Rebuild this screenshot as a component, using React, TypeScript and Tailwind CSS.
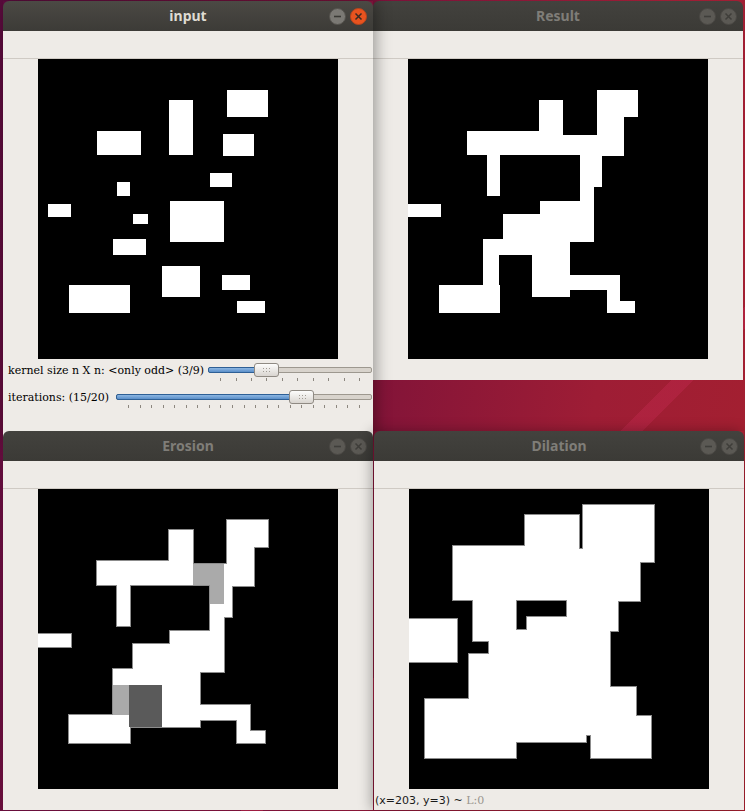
import React from 'react';

type Box = [number, number, number, number, string?];

const INPUT: Box[] = [
  [189, 31, 41, 27], [131, 41, 24, 55], [59, 72, 44, 24], [185, 75, 31, 22],
  [172, 114, 22, 14], [79, 123, 13, 14], [10, 145, 23, 13], [95, 155, 15, 10],
  [132, 142, 54, 41], [75, 180, 33, 16], [124, 207, 38, 31], [184, 216, 28, 15],
  [31, 226, 61, 28], [199, 242, 28, 12],
];

const RESULT: Box[] = [
  [189, 31, 41, 27], [189, 31, 27, 66], [131, 41, 24, 55], [59, 72, 72, 24],
  [155, 76, 34, 20], [79, 96, 13, 41], [172, 96, 22, 32], [172, 128, 14, 14],
  [132, 142, 54, 41], [95, 155, 37, 25], [75, 180, 87, 16], [124, 183, 38, 55],
  [75, 196, 16, 30], [31, 226, 61, 28], [162, 216, 50, 15], [199, 231, 13, 11],
  [199, 242, 28, 12], [0, 145, 33, 13],
];

const EROSION: Box[] = [
  [189, 31, 41, 27], [189, 31, 27, 66], [186, 75, 30, 22], [131, 41, 24, 55],
  [59, 72, 96, 24], [79, 96, 13, 41], [186, 96, 8, 32], [172, 115, 14, 27],
  [0, 145, 33, 13], [132, 142, 54, 41], [95, 155, 37, 25], [75, 180, 87, 16],
  [124, 183, 38, 55], [31, 226, 61, 28], [162, 216, 50, 15], [199, 231, 13, 11],
  [199, 242, 28, 12],
  [155, 75, 31, 21, '#aaaaaa'], [172, 96, 14, 19, '#aaaaaa'],
  [75, 196, 16, 30, '#aaaaaa'], [91, 196, 33, 42, '#5a5a5a'],
];

const DILATION: Box[] = [
  [174, 16, 71, 57], [116, 26, 54, 34], [44, 57, 126, 54], [170, 60, 61, 52],
  [64, 111, 145, 31], [64, 142, 137, 10], [80, 152, 121, 13], [60, 165, 141, 33],
  [60, 198, 117, 12], [177, 198, 50, 29], [107, 210, 70, 43], [182, 227, 60, 42],
  [177, 227, 6, 19], [16, 210, 91, 59], [0, 130, 48, 43],
];

function Canvas({ boxes, outline = false, hole = false }: { boxes: Box[]; outline?: boolean; hole?: boolean }) {
  return (
    <svg width={300} height={300} viewBox="0 0 300 300" className="block" shapeRendering="crispEdges">
      <rect width={300} height={300} fill="#000" />
      {outline &&
        boxes.map(([x, y, w, h], i) => (
          <rect key={'o' + i} x={x} y={y} width={w} height={h} fill="none" stroke="#8c8c8c" strokeWidth={2} />
        ))}
      {boxes.map(([x, y, w, h, c], i) => (
        <rect key={i} x={x} y={y} width={w} height={h} fill={c ?? '#fff'} />
      ))}
      {hole && <path d="M107 111 H157 V127 H117 V140 H107 Z" fill="#000" stroke="#8c8c8c" strokeWidth={1} />}
    </svg>
  );
}

function TitleButtons({ active }: { active: boolean }) {
  return (
    <div className="absolute right-[6px] top-[7px] flex gap-[4px]">
      <div
        className={`w-[17px] h-[17px] rounded-full flex items-center justify-center border ${
          active ? 'bg-[#7b7974] border-[#55534e]' : 'bg-[#5b5954] border-[#4a4844]'
        }`}
      >
        <svg width="9" height="9" viewBox="0 0 9 9">
          <path d="M1 4.5 H8" stroke={active ? '#3a3935' : '#3f3e3a'} strokeWidth="1.6" />
        </svg>
      </div>
      <div
        className={`w-[17px] h-[17px] rounded-full flex items-center justify-center border ${
          active ? 'bg-[#e8531f] border-[#b8441c]' : 'bg-[#5b5954] border-[#4a4844]'
        }`}
      >
        <svg width="9" height="9" viewBox="0 0 9 9">
          <path d="M1.5 1.5 L7.5 7.5 M7.5 1.5 L1.5 7.5" stroke={active ? '#3b2a22' : '#3f3e3a'} strokeWidth="1.5" />
        </svg>
      </div>
    </div>
  );
}

function Window({
  title,
  active = false,
  className,
  children,
}: {
  title: string;
  active?: boolean;
  className: string;
  children: React.ReactNode;
}) {
  return (
    <div className={`absolute flex flex-col ${className}`}>
      <div
        className={`relative h-[30px] shrink-0 rounded-t-[6px] flex items-center justify-center ${
          active ? 'bg-gradient-to-b from-[#4b4944] to-[#3c3b37]' : 'bg-gradient-to-b from-[#43423e] to-[#3b3a36]'
        }`}
      >
        <span
          className={`font-['Noto_Sans'] font-bold text-[14px] leading-none ${
            active ? 'text-[#dfdbd2]' : 'text-[#7f7d78]'
          }`}
        >
          {title}
        </span>
        <TitleButtons active={active} />
      </div>
      <div className="flex-1 bg-[#eeebe7] flex flex-col">
        <div className="h-[28px] shrink-0 border-b border-[#cfcac4]" />
        {children}
      </div>
    </div>
  );
}

function Slider({ value, max }: { value: number; max: number }) {
  const frac = value / max;
  return (
    <div className="relative flex-1 h-[19px]">
      <div className="absolute left-0 right-0 top-[4px] h-[6px] rounded-[2px] border border-[#9d988f] bg-[#d8d3cc]" />
      <div
        className="absolute left-0 top-[4px] h-[6px] rounded-l-[2px] border border-[#2e5f95] bg-gradient-to-b from-[#8cb6e2] to-[#5b8fc9]"
        style={{ width: `calc(${frac} * (100% - 24px) + 12px)` }}
      />
      <div
        className="absolute top-0 w-[25px] h-[14px] rounded-[3px] border border-[#8f8a83] bg-gradient-to-b from-[#fdfdfc] to-[#d9d5d0] flex items-center justify-center"
        style={{ left: `calc(${frac} * (100% - 24px) - 1px)` }}
      >
        <div className="w-[8px] h-[7px] bg-[radial-gradient(#a19c95_0.8px,transparent_1px)] bg-[length:3px_3px]" />
      </div>
      <div className="absolute left-[12px] right-[12px] top-[15px] flex justify-between">
        {Array.from({ length: max + 1 }).map((_, i) => (
          <div key={i} className="w-px h-[3px] bg-[#8c877f]" />
        ))}
      </div>
    </div>
  );
}

export default function App() {
  return (
    <div className="relative w-[745px] h-[811px] overflow-hidden bg-[linear-gradient(135deg,transparent_67.6%,rgba(185,38,72,0.55)_67.6%,rgba(185,38,72,0.55)_69%,transparent_69%),linear-gradient(100deg,#5a0b3d_0%,#7d1239_45%,#9e1d35_75%,#a5202f_100%)]">
      {/* Result */}
      <Window title="Result" className="left-[373px] top-[1px] w-[370px] h-[379px]">
        <div className="flex justify-center">
          <Canvas boxes={RESULT} />
        </div>
      </Window>

      {/* input with trackbars */}
      <Window title="input" active className="left-[3px] top-[1px] w-[370px] h-[440px] shadow-[3px_0_14px_rgba(0,0,0,0.35)]">
        <div className="flex justify-center">
          <Canvas boxes={INPUT} />
        </div>
        <div className="flex items-start mt-[4px] pl-[5px] pr-[1px]">
          <span className="font-['DejaVu_Serif'] text-[11px] leading-[15px] text-black whitespace-pre mr-[4px]">
            kernel size n X n: &lt;only odd&gt; (3/9)
          </span>
          <Slider value={3} max={9} />
        </div>
        <div className="flex items-start mt-[8px] pl-[5px] pr-[1px]">
          <span className="font-['DejaVu_Serif'] text-[11px] leading-[15px] text-black whitespace-pre mr-[7px]">
            iterations: (15/20)
          </span>
          <Slider value={15} max={20} />
        </div>
      </Window>

      {/* Erosion */}
      <Window title="Erosion" className="left-[3px] top-[431px] w-[370px] h-[379px]">
        <div className="flex justify-center">
          <Canvas boxes={EROSION} outline />
        </div>
      </Window>

      {/* Dilation */}
      <Window title="Dilation" className="left-[374px] top-[431px] w-[370px] h-[379px] shadow-[-3px_0_12px_rgba(0,0,0,0.3)]">
        <div className="flex justify-center">
          <Canvas boxes={DILATION} outline hole />
        </div>
        <div className="mt-[5px] pl-[1px] flex items-baseline whitespace-pre text-[11px] leading-[14px]">
          <span className="font-['DejaVu_Sans'] text-[#1a1a1a]">(x=203, y=3) ~ </span>
          <span className="font-['DejaVu_Serif'] text-[#9a968f]">L:0</span>
        </div>
      </Window>
    </div>
  );
}
